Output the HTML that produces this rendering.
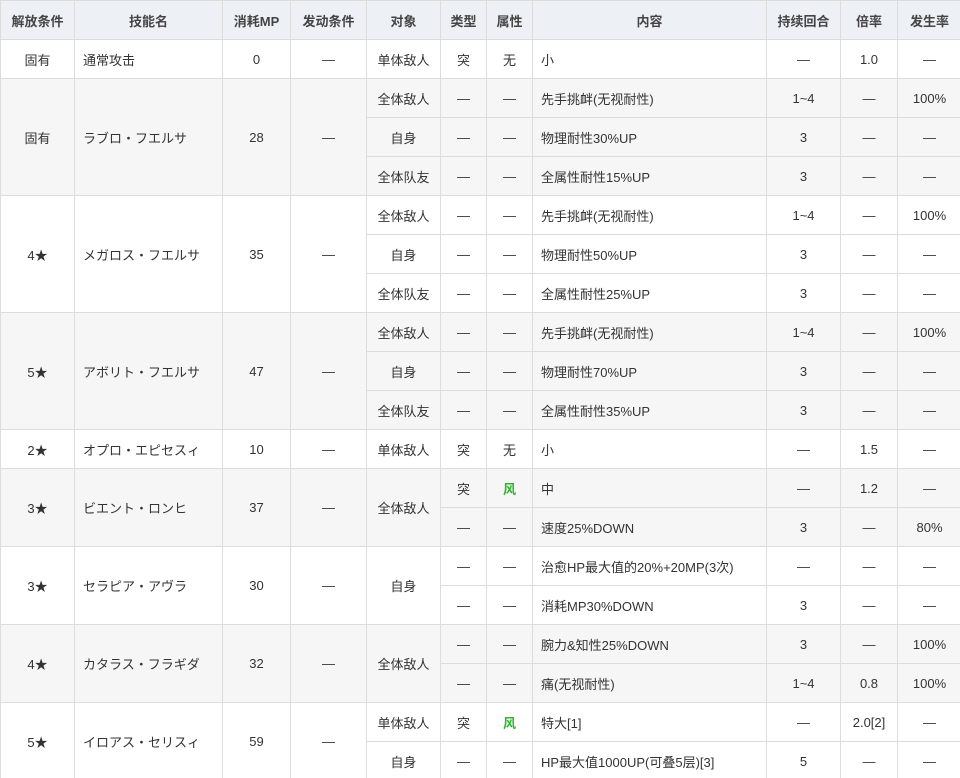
<!DOCTYPE html>
<html><head><meta charset="utf-8"><style>
html,body{margin:0;padding:0;background:#fff;width:960px;height:778px;overflow:hidden}
table{border-collapse:collapse;table-layout:fixed;width:961px;font-family:"Liberation Sans","Noto Sans CJK SC",sans-serif;font-size:13px;color:#333}
td,th{border:1px solid #dcdcdc;height:38px;padding:0 6px;text-align:center;vertical-align:middle;white-space:nowrap;overflow:hidden}
th{background:#edf1f5;font-weight:bold;color:#444;height:38px}
tr.g td{background:#f6f6f6}
td.l{text-align:left;padding-left:8px}
.w{color:#2db52d;font-weight:bold}
</style></head><body>
<table>
<colgroup><col style="width:74px"><col style="width:148px"><col style="width:68px"><col style="width:76px"><col style="width:74px"><col style="width:46px"><col style="width:46px"><col style="width:234px"><col style="width:74px"><col style="width:57px"><col style="width:64px"></colgroup>
<tr><th>解放条件</th><th>技能名</th><th>消耗MP</th><th>发动条件</th><th>对象</th><th>类型</th><th>属性</th><th>内容</th><th>持续回合</th><th>倍率</th><th>发生率</th></tr>
<tr><td>固有</td><td class="l">通常攻击</td><td>0</td><td>—</td><td>单体敌人</td><td>突</td><td>无</td><td class="l">小</td><td>—</td><td>1.0</td><td>—</td></tr>
<tr class="g"><td rowspan="3">固有</td><td rowspan="3" class="l">ラブロ・フエルサ</td><td rowspan="3">28</td><td rowspan="3">—</td><td>全体敌人</td><td>—</td><td>—</td><td class="l">先手挑衅(无视耐性)</td><td>1~4</td><td>—</td><td>100%</td></tr>
<tr class="g"><td>自身</td><td>—</td><td>—</td><td class="l">物理耐性30%UP</td><td>3</td><td>—</td><td>—</td></tr>
<tr class="g"><td>全体队友</td><td>—</td><td>—</td><td class="l">全属性耐性15%UP</td><td>3</td><td>—</td><td>—</td></tr>
<tr><td rowspan="3">4★</td><td rowspan="3" class="l">メガロス・フエルサ</td><td rowspan="3">35</td><td rowspan="3">—</td><td>全体敌人</td><td>—</td><td>—</td><td class="l">先手挑衅(无视耐性)</td><td>1~4</td><td>—</td><td>100%</td></tr>
<tr><td>自身</td><td>—</td><td>—</td><td class="l">物理耐性50%UP</td><td>3</td><td>—</td><td>—</td></tr>
<tr><td>全体队友</td><td>—</td><td>—</td><td class="l">全属性耐性25%UP</td><td>3</td><td>—</td><td>—</td></tr>
<tr class="g"><td rowspan="3">5★</td><td rowspan="3" class="l">アボリト・フエルサ</td><td rowspan="3">47</td><td rowspan="3">—</td><td>全体敌人</td><td>—</td><td>—</td><td class="l">先手挑衅(无视耐性)</td><td>1~4</td><td>—</td><td>100%</td></tr>
<tr class="g"><td>自身</td><td>—</td><td>—</td><td class="l">物理耐性70%UP</td><td>3</td><td>—</td><td>—</td></tr>
<tr class="g"><td>全体队友</td><td>—</td><td>—</td><td class="l">全属性耐性35%UP</td><td>3</td><td>—</td><td>—</td></tr>
<tr><td>2★</td><td class="l">オプロ・エピセスィ</td><td>10</td><td>—</td><td>单体敌人</td><td>突</td><td>无</td><td class="l">小</td><td>—</td><td>1.5</td><td>—</td></tr>
<tr class="g"><td rowspan="2">3★</td><td rowspan="2" class="l">ビエント・ロンヒ</td><td rowspan="2">37</td><td rowspan="2">—</td><td rowspan="2">全体敌人</td><td>突</td><td class="w">风</td><td class="l">中</td><td>—</td><td>1.2</td><td>—</td></tr>
<tr class="g"><td>—</td><td>—</td><td class="l">速度25%DOWN</td><td>3</td><td>—</td><td>80%</td></tr>
<tr><td rowspan="2">3★</td><td rowspan="2" class="l">セラピア・アヴラ</td><td rowspan="2">30</td><td rowspan="2">—</td><td rowspan="2">自身</td><td>—</td><td>—</td><td class="l">治愈HP最大值的20%+20MP(3次)</td><td>—</td><td>—</td><td>—</td></tr>
<tr><td>—</td><td>—</td><td class="l">消耗MP30%DOWN</td><td>3</td><td>—</td><td>—</td></tr>
<tr class="g"><td rowspan="2">4★</td><td rowspan="2" class="l">カタラス・フラギダ</td><td rowspan="2">32</td><td rowspan="2">—</td><td rowspan="2">全体敌人</td><td>—</td><td>—</td><td class="l">腕力&amp;知性25%DOWN</td><td>3</td><td>—</td><td>100%</td></tr>
<tr class="g"><td>—</td><td>—</td><td class="l">痛(无视耐性)</td><td>1~4</td><td>0.8</td><td>100%</td></tr>
<tr><td rowspan="2">5★</td><td rowspan="2" class="l">イロアス・セリスィ</td><td rowspan="2">59</td><td rowspan="2">—</td><td>单体敌人</td><td>突</td><td class="w">风</td><td class="l">特大[1]</td><td>—</td><td>2.0[2]</td><td>—</td></tr>
<tr><td>自身</td><td>—</td><td>—</td><td class="l">HP最大值1000UP(可叠5层)[3]</td><td>5</td><td>—</td><td>—</td></tr>
</table>
</body></html>
